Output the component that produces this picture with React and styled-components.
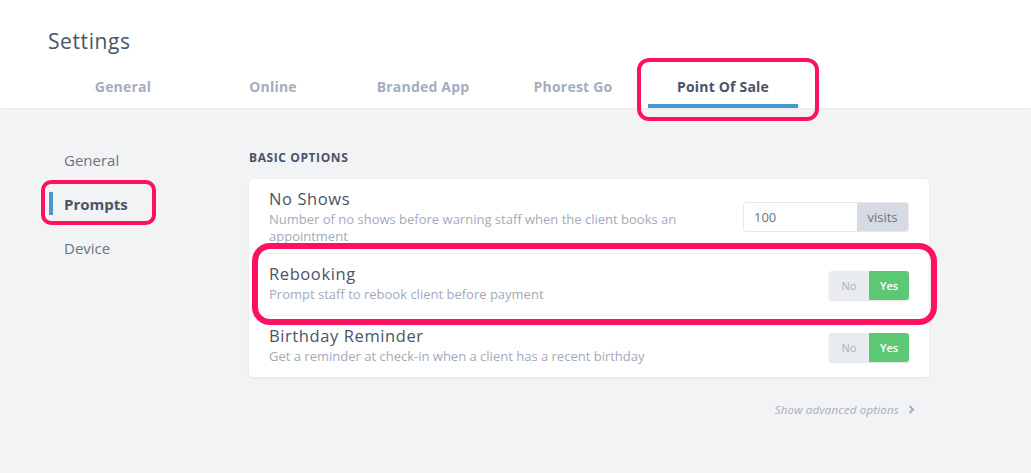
import React from 'react';
import styled, { createGlobalStyle } from 'styled-components';

const GlobalStyle = createGlobalStyle`
  * { box-sizing: border-box; }
  body {
    margin: 0;
    background: #f2f3f5;
    font-family: "Open Sans", "Noto Sans", Arial, sans-serif;
    color: #4a5468;
  }
`;

const Page = styled.div`
  position: relative;
  width: 1031px;
  min-height: 473px;
  background: #f2f3f5;
`;

const Header = styled.div`
  background: #fff;
  padding: 27px 48px 0;
  box-shadow: 0 1px 2px rgba(0, 0, 0, 0.04);
`;

const Title = styled.h1`
  margin: 0;
  font-size: 21px;
  line-height: 28px;
  font-weight: 500;
  letter-spacing: 0.6px;
  color: #4a5468;
`;

const Tabs = styled.div`
  display: flex;
  margin-top: 13px;
`;

const Tab = styled.div`
  width: 150px;
  height: 40px;
  display: flex;
  align-items: center;
  justify-content: center;
  font-size: 14px;
  font-weight: 700;
  letter-spacing: 0.2px;
  color: ${(p) => (p.active ? '#4a5468' : '#a3adc1')};
  border-bottom: 4px solid ${(p) => (p.active ? '#4898d0' : 'transparent')};
`;

const Body = styled.div`
  display: flex;
  padding: 30px 48px 0;
`;

const Sidebar = styled.div`
  width: 201px;
  display: flex;
  flex-direction: column;
`;

const SideItem = styled.div`
  position: relative;
  height: 44px;
  display: flex;
  align-items: center;
  padding-left: 16px;
  font-size: 15px;
  font-weight: ${(p) => (p.active ? 700 : 400)};
  color: ${(p) => (p.active ? '#4a5468' : '#6b7485')};

  &::before {
    content: '';
    display: ${(p) => (p.active ? 'block' : 'none')};
    position: absolute;
    left: 1px;
    top: 10px;
    width: 4px;
    height: 23px;
    background: #4898d0;
  }
`;

const Content = styled.div`
  width: 680px;
  padding-top: 12px;
`;

const SectionLabel = styled.div`
  font-size: 12px;
  line-height: 16px;
  font-weight: 700;
  letter-spacing: 0.6px;
  color: #4a5468;
  margin-bottom: 13px;
`;

const Card = styled.div`
  background: #fff;
  border-radius: 4px;
  box-shadow: 0 1px 3px rgba(0, 0, 0, 0.06);
`;

const Row = styled.div`
  display: flex;
  align-items: center;
  justify-content: space-between;
  min-height: 62px;
  padding: 10px 20px 8px;
  border-top: ${(p) => (p.first ? 'none' : '1px solid #eef0f3')};
`;

const RowText = styled.div`
  align-self: flex-start;
  max-width: 440px;
`;

const RowTitle = styled.div`
  font-size: 16.5px;
  line-height: 20px;
  font-weight: 500;
  letter-spacing: 0.6px;
  color: #4a5468;
`;

const RowDesc = styled.div`
  margin-top: 2px;
  font-size: 13px;
  line-height: 17px;
  color: #a3aabb;
`;

const InputGroup = styled.div`
  display: flex;
  height: 30px;
  border: 1px solid #e6e9ee;
  border-radius: 3px;
  overflow: hidden;
`;

const NumberInput = styled.div`
  width: 113px;
  padding-left: 10px;
  display: flex;
  align-items: center;
  font-size: 13px;
  color: #6b7485;
  background: #fff;
`;

const Addon = styled.div`
  width: 51px;
  display: flex;
  align-items: center;
  justify-content: center;
  font-size: 13px;
  color: #6b7485;
  background: #d6dae1;
`;

const Toggle = styled.div`
  display: flex;
  height: 29px;
  border-radius: 3px;
  overflow: hidden;
  box-shadow: 0 1px 2px rgba(0, 0, 0, 0.12);
`;

const ToggleOption = styled.div`
  width: 40px;
  display: flex;
  align-items: center;
  justify-content: center;
  font-size: 11px;
  font-weight: ${(p) => (p.on ? 600 : 400)};
  color: ${(p) => (p.on ? '#fff' : '#a9b0bd')};
  background: ${(p) => (p.on ? '#5cc874' : '#e8ebef')};
`;

const Footer = styled.div`
  display: flex;
  justify-content: flex-end;
  align-items: center;
  gap: 9px;
  padding: 25px 14px 0 0;
  font-size: 11.5px;
  font-style: italic;
  letter-spacing: 0.2px;
  color: #a7aebb;
`;

const Annotation = styled.div`
  position: absolute;
  border: ${(p) => p.stroke || 4}px solid #ff1060;
  border-radius: ${(p) => p.radius || 12}px;
  pointer-events: none;
`;

const Chevron = () => (
  <svg width="7" height="9" viewBox="0 0 7 9">
    <path d="M1.5 1 L5 4.5 L1.5 8" fill="none" stroke="#a7aebb" strokeWidth="2" />
  </svg>
);

const YesNo = () => (
  <Toggle>
    <ToggleOption>No</ToggleOption>
    <ToggleOption on>Yes</ToggleOption>
  </Toggle>
);

export default function App() {
  const tabs = ['General', 'Online', 'Branded App', 'Phorest Go', 'Point Of Sale'];
  return (
    <Page>
      <GlobalStyle />
      <Header>
        <Title>Settings</Title>
        <Tabs>
          {tabs.map((t) => (
            <Tab key={t} active={t === 'Point Of Sale'}>{t}</Tab>
          ))}
        </Tabs>
      </Header>
      <Body>
        <Sidebar>
          <SideItem>General</SideItem>
          <SideItem active>Prompts</SideItem>
          <SideItem>Device</SideItem>
        </Sidebar>
        <Content>
          <SectionLabel>BASIC OPTIONS</SectionLabel>
          <Card>
            <Row first>
              <RowText>
                <RowTitle>No Shows</RowTitle>
                <RowDesc>Number of no shows before warning staff when the client books an appointment</RowDesc>
              </RowText>
              <InputGroup>
                <NumberInput>100</NumberInput>
                <Addon>visits</Addon>
              </InputGroup>
            </Row>
            <Row>
              <RowText>
                <RowTitle>Rebooking</RowTitle>
                <RowDesc>Prompt staff to rebook client before payment</RowDesc>
              </RowText>
              <YesNo />
            </Row>
            <Row>
              <RowText>
                <RowTitle>Birthday Reminder</RowTitle>
                <RowDesc>Get a reminder at check-in when a client has a recent birthday</RowDesc>
              </RowText>
              <YesNo />
            </Row>
          </Card>
          <Footer>
            Show advanced options
            <Chevron />
          </Footer>
        </Content>
      </Body>
      <Annotation style={{ left: 637, top: 58, width: 182, height: 63 }} stroke={4.5} radius={12} />
      <Annotation style={{ left: 41, top: 180, width: 115, height: 45 }} stroke={4} radius={10} />
      <Annotation style={{ left: 252, top: 243, width: 685, height: 82 }} stroke={6} radius={18} />
    </Page>
  );
}
